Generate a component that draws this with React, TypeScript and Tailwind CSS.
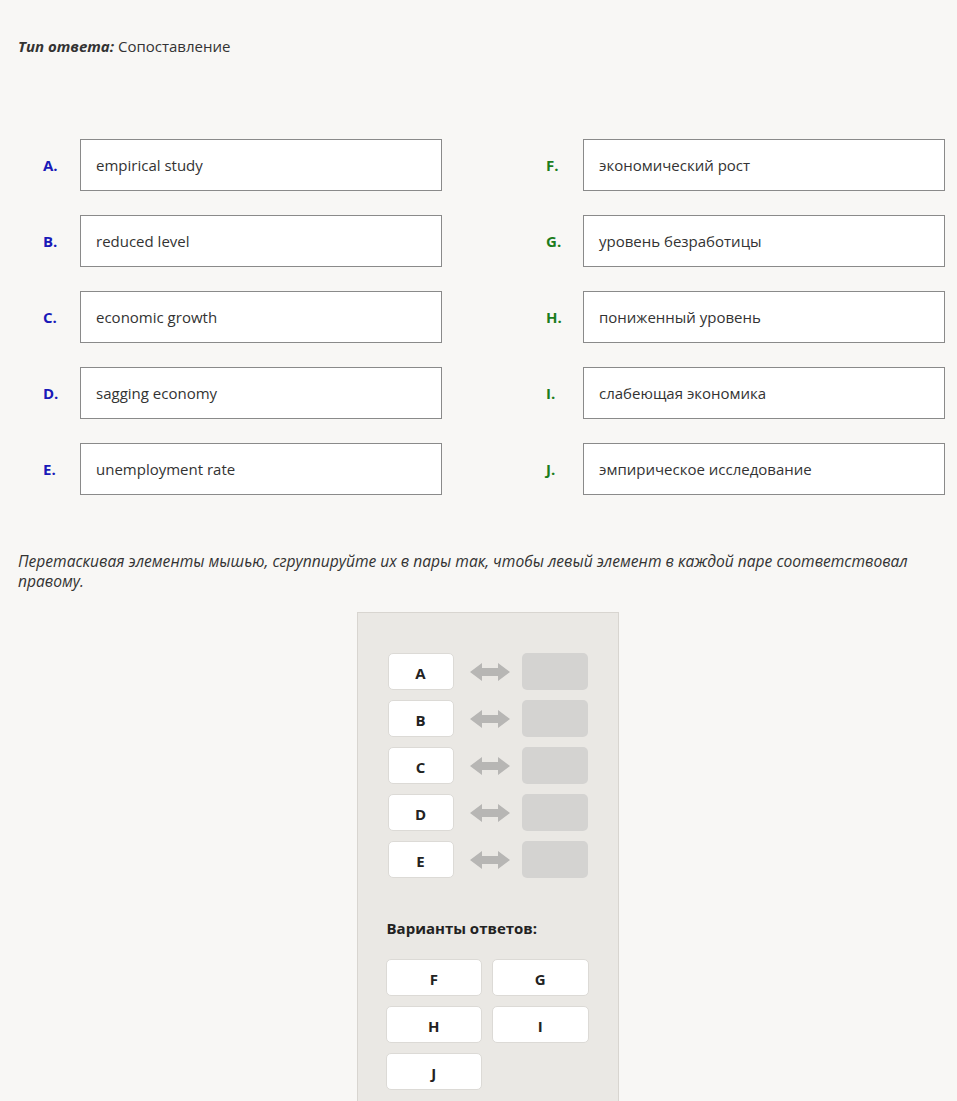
import React from 'react';

type Item = { key: string; text: string };

const leftItems: Item[] = [
  { key: 'A', text: 'empirical study' },
  { key: 'B', text: 'reduced level' },
  { key: 'C', text: 'economic growth' },
  { key: 'D', text: 'sagging economy' },
  { key: 'E', text: 'unemployment rate' },
];

const rightItems: Item[] = [
  { key: 'F', text: 'экономический рост' },
  { key: 'G', text: 'уровень безработицы' },
  { key: 'H', text: 'пониженный уровень' },
  { key: 'I', text: 'слабеющая экономика' },
  { key: 'J', text: 'эмпирическое исследование' },
];

const ArrowBoth = () => (
  <svg width="40" height="20" viewBox="0 0 40 20" className="block">
    <path d="M0 10 L12 1 L12 6 L28 6 L28 1 L40 10 L28 19 L28 14 L12 14 L12 19 Z" fill="#b7b6b4" />
  </svg>
);

const ItemColumn: React.FC<{ items: Item[]; labelClass: string }> = ({ items, labelClass }) => (
  <div className="flex w-[424px] flex-col gap-[24px]">
    {items.map((item) => (
      <div key={item.key} className="flex items-center">
        <div className={`w-[62px] pl-[25px] text-[15px] font-bold ${labelClass}`}>{item.key}.</div>
        <div className="flex h-[52px] w-[362px] items-center border border-[#8a8a8a] bg-white px-[15px] text-[15px] text-[#333]">
          {item.text}
        </div>
      </div>
    ))}
  </div>
);

const Tile: React.FC<{ label: string; className?: string }> = ({ label, className = '' }) => (
  <div
    className={`flex h-[37px] items-center justify-center rounded-[5px] border border-[#dcdad6] bg-white pt-[4px] text-[15px] font-bold text-[#222] ${className}`}
  >
    {label}
  </div>
);

export default function App() {
  return (
    <div
      className="min-h-screen bg-[#f8f7f5] pl-[18px] pt-[36px] text-[#333]"
      style={{ fontFamily: '"Open Sans", "Noto Sans", sans-serif' }}
    >
      <p className="text-[15px] leading-[20px]">
        <span className="font-bold italic">Тип ответа:</span> Сопоставление
      </p>

      <div className="mt-[83px] flex gap-[79px]">
        <ItemColumn items={leftItems} labelClass="text-[#1a1ab8]" />
        <ItemColumn items={rightItems} labelClass="text-[#1c7d1c]" />
      </div>

      <p className="mt-[56px] pr-[30px] text-[15.6px] italic leading-[20px]">
        Перетаскивая элементы мышью, сгруппируйте их в пары так, чтобы левый элемент в каждой паре соответствовал
        правому.
      </p>

      <div className="mt-[21px] w-[939px]">
        <div className="mx-auto w-[262px] border border-[#d8d5d0] bg-[#eae8e4] pb-[40px] pl-[28px] pr-[28px] pt-[40px]">
          <div className="flex flex-col gap-[10px] pl-[2px]">
            {leftItems.map((item) => (
              <div key={item.key} className="flex items-center">
                <Tile label={item.key} className="w-[66px]" />
                <div className="flex w-[68px] justify-center pl-[4px]">
                  <ArrowBoth />
                </div>
                <div className="h-[37px] w-[66px] rounded-[5px] bg-[#d4d3d1]" />
              </div>
            ))}
          </div>

          <div className="mt-[40px] pl-[1px] text-[15px] font-bold leading-[20px] text-[#222]">Варианты ответов:</div>

          <div className="mt-[21px] grid w-[203px] grid-cols-2 gap-[10px]">
            {rightItems.map((item) => (
              <Tile key={item.key} label={item.key} />
            ))}
          </div>
        </div>
      </div>
    </div>
  );
}
